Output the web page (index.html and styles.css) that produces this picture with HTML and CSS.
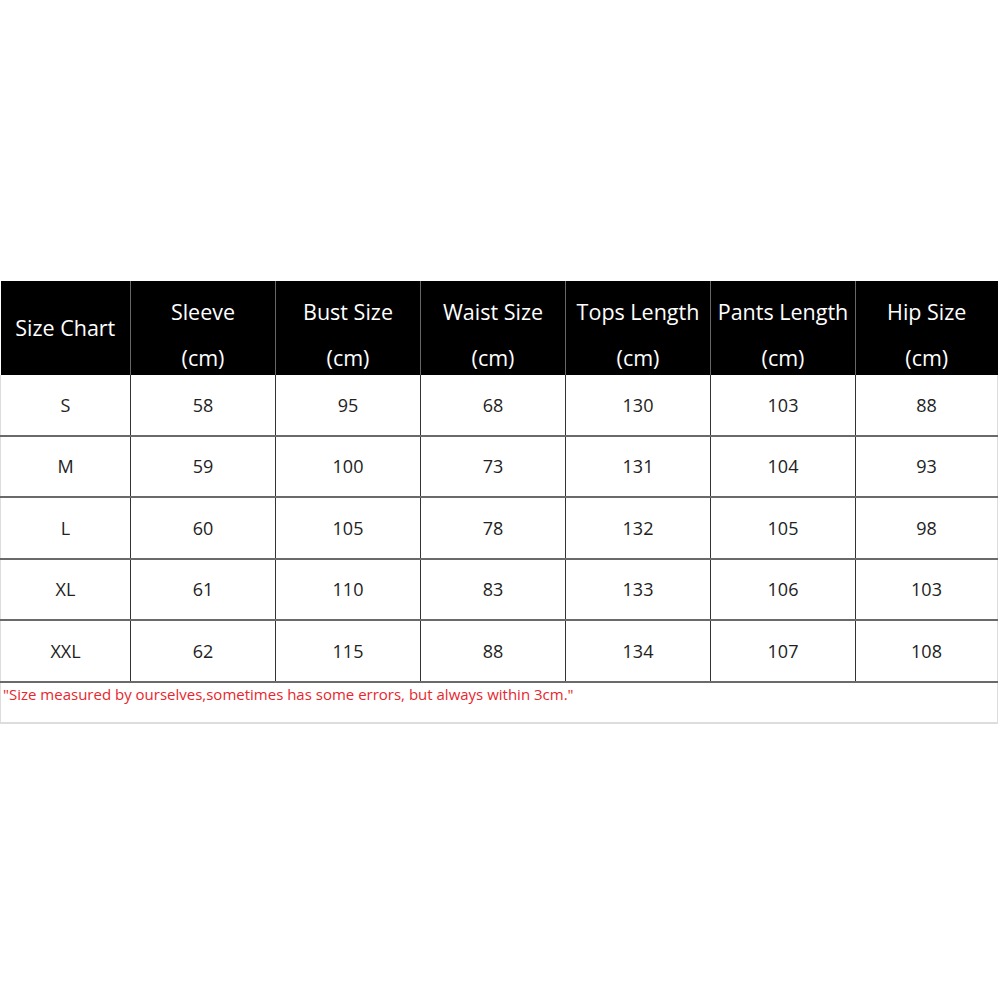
FILE: index.html
```html
<!DOCTYPE html>
<html>
<head>
<meta charset="utf-8">
<link rel="stylesheet" href="styles.css">
</head>
<body>
<div class="page">
<table class="chart">
<colgroup>
<col class="c0"><col class="c1"><col class="c1"><col class="c1"><col class="c1"><col class="c1"><col class="c6">
</colgroup>
<thead>
<tr class="head">
<th class="first">Size Chart</th>
<th><span class="l1">Sleeve</span><span class="l2">(cm)</span></th>
<th><span class="l1">Bust Size</span><span class="l2">(cm)</span></th>
<th><span class="l1">Waist Size</span><span class="l2">(cm)</span></th>
<th><span class="l1">Tops Length</span><span class="l2">(cm)</span></th>
<th><span class="l1">Pants Length</span><span class="l2">(cm)</span></th>
<th><span class="l1">Hip Size</span><span class="l2">(cm)</span></th>
</tr>
</thead>
<tbody>
<tr><td>S</td><td>58</td><td>95</td><td>68</td><td>130</td><td>103</td><td>88</td></tr>
<tr><td>M</td><td>59</td><td>100</td><td>73</td><td>131</td><td>104</td><td>93</td></tr>
<tr><td>L</td><td>60</td><td>105</td><td>78</td><td>132</td><td>105</td><td>98</td></tr>
<tr><td>XL</td><td>61</td><td>110</td><td>83</td><td>133</td><td>106</td><td>103</td></tr>
<tr><td>XXL</td><td>62</td><td>115</td><td>88</td><td>134</td><td>107</td><td>108</td></tr>
<tr class="note-row"><td colspan="7" class="note">"Size measured by ourselves,sometimes has some errors, but always within 3cm."</td></tr>
</tbody>
</table>
</div>
</body>
</html>
```

FILE: styles.css
```css
html, body {
  margin: 0;
  padding: 0;
  background: #fff;
}
.page {
  padding-top: 281px;
}
.chart {
  width: 997px;
  table-layout: fixed;
  border-collapse: collapse;
  font-family: "Open Sans", "Liberation Sans", sans-serif;
}
.c0 { width: 130px; }
.c1 { width: 145px; }
.c6 { width: 142px; }
.head {
  height: 94px;
}
.chart th {
  background: #000;
  color: #fff;
  font-weight: 400;
  font-size: 21.5px;
  line-height: 30px;
  padding: 16px 0 0 0;
  text-align: center;
  vertical-align: top;
  border-left: 1px solid #666;
}
.l1, .l2 {
  display: block;
}
.l2 {
  margin-top: 16px;
}
.chart th.first {
  border-left: none;
  padding: 0;
  vertical-align: middle;
}
.chart td {
  height: 59.5px;
  padding: 0;
  text-align: center;
  vertical-align: middle;
  font-size: 18px;
  color: #222;
  border-left: 1px solid #333;
  border-bottom: 2px solid #6a6a6a;
}
.chart tbody tr td:first-child {
  border-left: 1px solid #ddd;
}
.chart tbody tr td:last-child {
  border-right: 1px solid #ddd;
}
.chart td.note {
  height: 39.5px;
  text-align: left;
  vertical-align: top;
  font-size: 15px;
  line-height: 22px;
  color: #e8262d;
  padding-left: 2px;
  border-bottom: 2px solid #ddd;
  border-left: 1px solid #ddd;
  border-right: 1px solid #ddd;
}
```
